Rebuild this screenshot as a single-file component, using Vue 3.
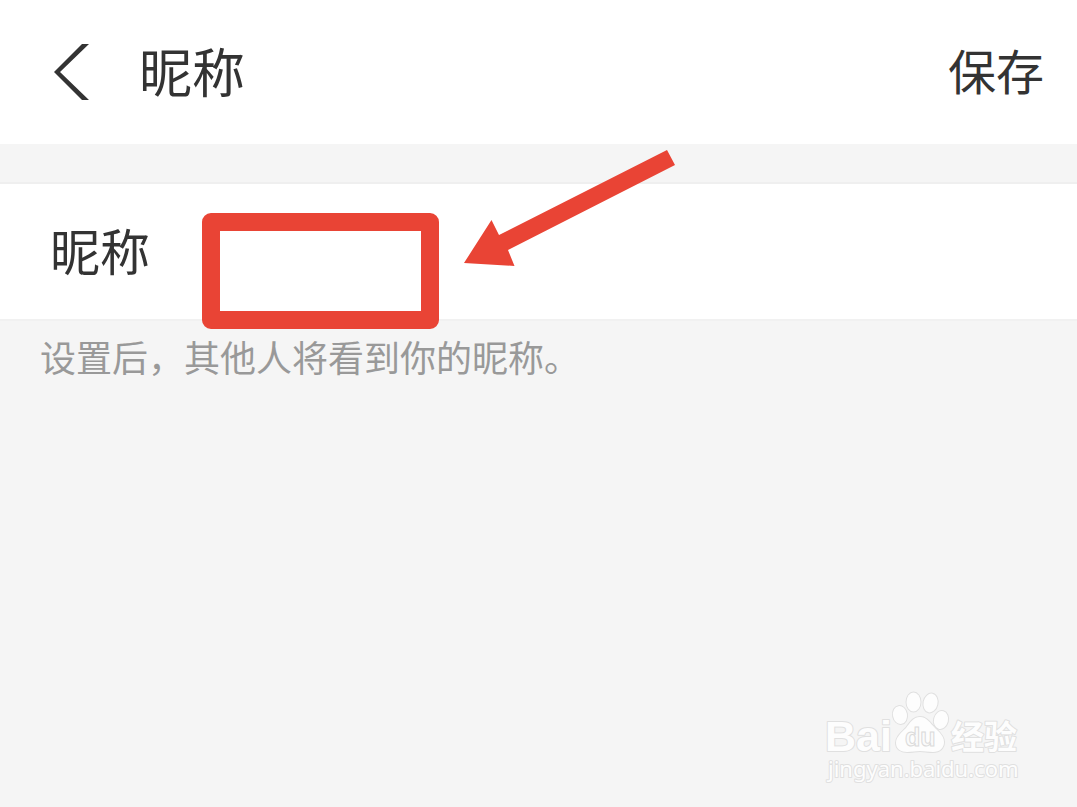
<script setup>
import { ref } from 'vue'

const nickname = ref('')
</script>

<template>
  <div class="page">
    <header class="bar">
      <button class="back" type="button" aria-label="返回">
        <svg width="40" height="60" viewBox="0 0 40 60" aria-hidden="true">
          <path d="M32 2H39L10 30L39 58H32L4 30Z" fill="#333" />
        </svg>
      </button>
      <h1 class="title">昵称</h1>
      <button class="save" type="button">保存</button>
    </header>

    <main>
      <div class="row">
        <label class="label" for="nickname">昵称</label>
        <div class="field">
          <input id="nickname" v-model="nickname" class="input" type="text" autocomplete="off" />
          <div class="frame"></div>
          <svg class="arrow" width="214" height="120" viewBox="0 0 214 120" aria-hidden="true">
            <path d="M2 115 L29.500 72 L37 87 L205 2 L213 17 L46 102 L52.500 118 Z" fill="#e94435" />
          </svg>
        </div>
      </div>
      <p class="hint">设置后，其他人将看到你的昵称。</p>
    </main>

    <svg class="mark" width="230" height="115" viewBox="0 0 230 115" role="img" aria-label="Baidu 经验">
      <g fill="#fdfdfd" stroke="#e0e0e0" stroke-width="2" paint-order="stroke" stroke-linejoin="round">
        <text class="latin" x="15" y="71" font-size="43">Bai</text>
        <ellipse cx="90" cy="35" rx="7" ry="9" transform="rotate(-10 90 35)" />
        <ellipse cx="103.500" cy="22" rx="7" ry="9.500" />
        <ellipse cx="120.500" cy="23" rx="7" ry="9.500" transform="rotate(12 120.500 23)" />
        <ellipse cx="131" cy="40" rx="7" ry="9" transform="rotate(15 131 40)" />
        <path d="M110 37 C103 37 100 43 96 48 C91 53 86 57 86 63 C86 69 91 72 97 72 C102 72 106 71 110 71 C114 71 118 72 123 72 C130 72 134 68 134 62 C134 56 129 52 125 48 C120 43 117 37 110 37 Z" />
        <text class="cjk" x="141" y="69" font-size="33">经验</text>
        <text class="url" x="18" y="97" font-size="22">jingyan.baidu.com</text>
      </g>
      <text class="latin" x="95" y="66" font-size="25" fill="#fafafa" stroke="#dadada" stroke-width="1">du</text>
    </svg>
  </div>
</template>

<style>
body {
  margin: 0;
  background: #f5f5f5;
}
</style>

<style scoped>
.page {
  position: relative;
  box-sizing: border-box;
  min-height: 100vh;
  background: #f5f5f5;
  color: #333;
  font-family: "Noto Sans CJK SC", sans-serif;
}
.bar {
  display: flex;
  align-items: center;
  box-sizing: border-box;
  height: 144px;
  padding: 0 33px 0 50px;
  background: #fff;
}
button {
  padding: 0;
  border: 0;
  background: none;
  color: inherit;
  font-family: inherit;
  cursor: pointer;
}
.back svg {
  display: block;
}
.title {
  flex: 1;
  margin: 0 0 0 49px;
  padding-bottom: 4px;
  font-size: 53px;
  font-weight: 400;
  line-height: 72px;
}
.save {
  padding-bottom: 6px;
  font-size: 48px;
  line-height: 72px;
}
.row {
  display: flex;
  align-items: center;
  box-sizing: border-box;
  height: 139px;
  margin-top: 38px;
  padding-left: 50px;
  border-top: 2px solid #efefef;
  border-bottom: 2px solid #f1f1f1;
  background: #fff;
}
.label {
  padding-bottom: 6px;
  font-size: 50px;
  line-height: 72px;
}
.field {
  position: relative;
  flex: 1;
  align-self: stretch;
  margin-left: 52px;
}
.input {
  box-sizing: border-box;
  width: 100%;
  height: 100%;
  padding: 0 36px;
  border: 0;
  outline: 0;
  background: transparent;
  color: inherit;
  font-family: inherit;
  font-size: 48px;
}
.frame {
  position: absolute;
  top: 29px;
  left: 0;
  box-sizing: border-box;
  width: 237px;
  height: 116px;
  border: 18px solid #e94435;
  border-radius: 9px;
  pointer-events: none;
}
.arrow {
  position: absolute;
  top: -36px;
  left: 260px;
  pointer-events: none;
}
.hint {
  margin: 9px 40px 0;
  color: #999;
  font-size: 36px;
  line-height: 52px;
}
.mark {
  position: absolute;
  right: 37px;
  bottom: 12px;
}
.latin {
  font-family: "Liberation Sans", Arial, sans-serif;
  font-weight: 700;
}
.cjk {
  font-family: "Noto Sans CJK SC", sans-serif;
  font-weight: 700;
}
.url {
  font-family: "Noto Sans", sans-serif;
}
</style>
